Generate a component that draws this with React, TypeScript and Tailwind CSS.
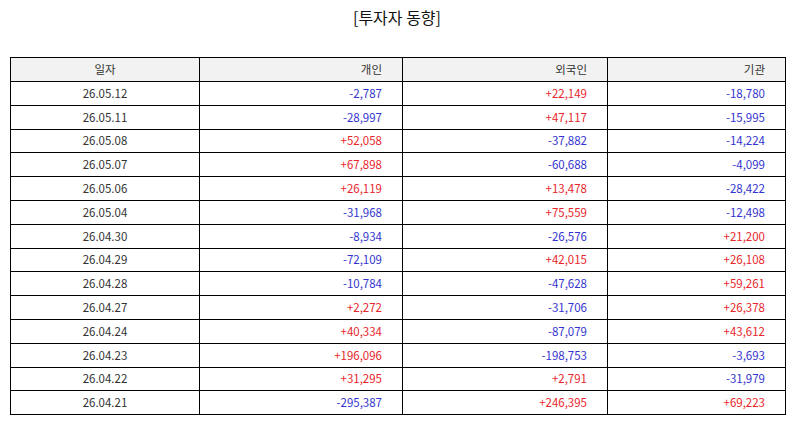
import React from 'react'

const rows: [string, string, string, string][] = [
    ['26.05.12', '-2,787', '+22,149', '-18,780'],
    ['26.05.11', '-28,997', '+47,117', '-15,995'],
    ['26.05.08', '+52,058', '-37,882', '-14,224'],
    ['26.05.07', '+67,898', '-60,688', '-4,099'],
    ['26.05.06', '+26,119', '+13,478', '-28,422'],
    ['26.05.04', '-31,968', '+75,559', '-12,498'],
    ['26.04.30', '-8,934', '-26,576', '+21,200'],
    ['26.04.29', '-72,109', '+42,015', '+26,108'],
    ['26.04.28', '-10,784', '-47,628', '+59,261'],
    ['26.04.27', '+2,272', '-31,706', '+26,378'],
    ['26.04.24', '+40,334', '-87,079', '+43,612'],
    ['26.04.23', '+196,096', '-198,753', '-3,693'],
    ['26.04.22', '+31,295', '+2,791', '-31,979'],
    ['26.04.21', '-295,387', '+246,395', '+69,223'],
]

const Num = ({ v }: { v: string }) => (
    <td className={`border-[1.5px] border-black text-right pr-[20px] ${v.startsWith('+') ? 'text-[#e8262c]' : 'text-[#3434d0]'}`}>
        {v}
    </td>
)

export default function App() {
    return (
        <div className="w-[794px] h-[425px] bg-white font-['Noto_Sans_CJK_KR','Noto_Sans',sans-serif] text-[#333]">
            <div className="h-[57px] pt-[5px] text-center text-[16px] leading-[24px] text-[#111]">[투자자 동향]</div>
            <table className="ml-[10px] w-[775px] border-collapse table-fixed text-[11.5px]">
                <colgroup>
                    <col className="w-[189px]" />
                    <col className="w-[203px]" />
                    <col className="w-[205px]" />
                    <col className="w-[178px]" />
                </colgroup>
                <thead>
                    <tr className="h-[24px] bg-[#f2f2f2]">
                        <th className="border-[1.5px] border-black font-normal text-center">일자</th>
                        <th className="border-[1.5px] border-black font-normal text-right pr-[20px]">개인</th>
                        <th className="border-[1.5px] border-black font-normal text-right pr-[20px]">외국인</th>
                        <th className="border-[1.5px] border-black font-normal text-right pr-[20px]">기관</th>
                    </tr>
                </thead>
                <tbody>
                    {rows.map(r => (
                        <tr key={r[0]} className="h-[23.8px]">
                            <td className="border-[1.5px] border-black text-center">{r[0]}</td>
                            <Num v={r[1]} />
                            <Num v={r[2]} />
                            <Num v={r[3]} />
                        </tr>
                    ))}
                </tbody>
            </table>
        </div>
    )
}
